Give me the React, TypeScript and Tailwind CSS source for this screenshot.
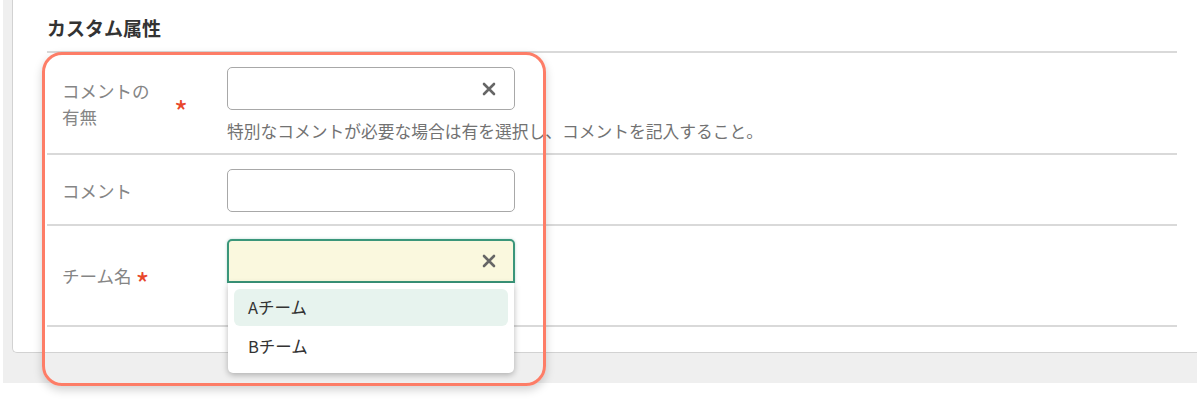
import React from "react";

const font = { fontFamily: '"Noto Sans CJK JP", "Noto Sans", sans-serif' };

const ClearIcon = () => (
  <svg width="14" height="14" viewBox="0 0 14 14" className="text-[#666]">
    <path d="M2 2L12 12M12 2L2 12" stroke="currentColor" strokeWidth="2.6" strokeLinecap="round" />
  </svg>
);

const Required = () => <span className="text-[30px] leading-none text-[#e8472c] pt-[14px]">*</span>;

const App = () => {
  return (
    <div className="relative w-[1200px] h-[399px] bg-white overflow-hidden" style={font}>
      <div className="ml-[3px] w-[1194px] h-[383px] bg-[#efefef] pl-[9px] pb-[30px] flex">
        <div className="flex-1 bg-white border-l border-b border-[#d2d2d2] rounded-bl-[5px] pl-[34px] pr-[20px] pb-[25px]">
          <h2 className="pt-[14px] pb-[9px] text-[19px] leading-[28px] font-bold text-[#333] border-b-2 border-[#d9d9d9]">
            カスタム属性
          </h2>

          {/* コメントの有無 */}
          <div className="flex border-b-2 border-[#d9d9d9] pt-[14px] pb-[12px]">
            <div className="w-[180px] pl-[15px] flex items-center gap-[4px]">
              <span className="w-[108px] text-[17.5px] leading-[26px] text-[#858585]">
                コメントの
                <br />
                有無
              </span>
              <Required />
            </div>
            <div>
              <div className="w-[288px] h-[43px] border border-[#a8a8a8] rounded-[5px] flex items-center justify-end pr-[18px]">
                <ClearIcon />
              </div>
              <p className="mt-[11px] text-[16.75px] leading-[20px] text-[#727272] whitespace-nowrap">
                特別なコメントが必要な場合は有を選択し、コメントを記入すること。
              </p>
            </div>
          </div>

          {/* コメント */}
          <div className="flex border-b-2 border-[#d9d9d9] pt-[14px] pb-[12px]">
            <div className="w-[180px] pl-[15px] flex items-center">
              <span className="text-[17.5px] leading-[26px] text-[#858585]">コメント</span>
            </div>
            <div className="w-[288px] h-[43px] border border-[#a8a8a8] rounded-[5px]" />
          </div>

          {/* チーム名 */}
          <div className="flex items-center border-b-2 border-[#d9d9d9] pt-[13px] pb-[13px]">
            <div className="w-[180px] pl-[15px] flex items-center gap-[4px]">
              <span className="text-[17.5px] leading-[26px] text-[#858585]">チーム名</span>
              <Required />
            </div>
            <div className="relative h-[73px]">
              <div className="w-[288px] h-[44px] border-2 border-[#3a967a] bg-[#faf8de] rounded-t-[5px] flex items-center justify-end pr-[17px] shadow-[0_0_3px_rgba(58,150,122,0.35)]">
                <ClearIcon />
              </div>
              <div className="absolute left-[1px] top-[44px] z-10 w-[286px] bg-white rounded-b-[5px] shadow-[0_2px_6px_rgba(0,0,0,0.28)] px-[6px] py-[6px]">
                <div className="h-[37px] rounded-[6px] bg-[#e7f3ee] pl-[14px] flex items-center text-[16.5px] text-[#333]">
                  Aチーム
                </div>
                <div className="h-[41px] pl-[14px] flex items-center text-[16.5px] text-[#333]">Bチーム</div>
              </div>
            </div>
          </div>
        </div>
      </div>

      {/* annotation outline */}
      <div className="absolute left-[42px] top-[52px] w-[504px] h-[334px] border-[3px] border-[#fd7d67] rounded-[20px] shadow-[0_4px_10px_rgba(0,0,0,0.18)] pointer-events-none" />
    </div>
  );
};

export default App;
